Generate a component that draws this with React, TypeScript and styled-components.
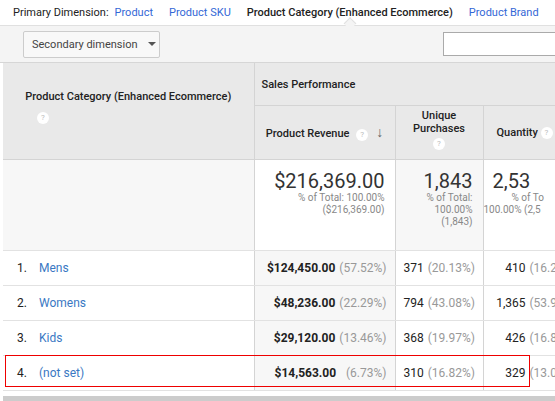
import React from "react";
import styled, { createGlobalStyle } from "styled-components";

const G = createGlobalStyle`
  body { margin: 0; font-family: Roboto, "Liberation Sans", sans-serif; background: #fff; overflow: hidden; }
`;
const Page = styled.div` width: 555px; height: 401px; overflow: hidden; position: relative; `;
const TopBar = styled.div`
  height: 25px; display: flex; align-items: center; gap: 16px; padding-left: 13px;
  font-size: 11px; color: #222; border-bottom: 1px solid #e0e0e0; position: relative;
`;
const Link = styled.span<{ $active?: boolean }>`
  color: ${p => (p.$active ? "#222" : "#3367d6")}; font-weight: ${p => (p.$active ? 500 : 400)};
  position: relative;
`;
const Caret = styled.span`
  position: absolute; left: 50%; bottom: -9px; width: 8px; height: 8px; background: #f4f4f4;
  border-left: 1px solid #e0e0e0; border-top: 1px solid #e0e0e0; transform: translateX(-50%) rotate(45deg);
`;
const Toolbar = styled.div`
  height: 36px; background: #f4f4f4; display: flex; align-items: center; justify-content: space-between;
  padding-left: 23px; border-bottom: 1px solid #d6d6d6;
`;
const Select = styled.div`
  height: 27px; width: 137px; box-sizing: border-box; border: 1px solid #ccc; border-radius: 2px; background: #f8f8f8;
  display: flex; align-items: center; gap: 10px; padding-left: 8px; font-size: 11px; color: #444;
`;
const Arrow = styled.span` width:0; height:0; border-left:4px solid transparent; border-right:4px solid transparent; border-top:4px solid #555; `;
const Search = styled.div` width: 120px; height: 22px; border: 1px solid #aaa; background: #fff; margin-right: -10px; `;
const Table = styled.table`
  margin-left: 3px; border-collapse: collapse; table-layout: fixed; width: 600px; font-size: 12px;
  td, th { padding: 0; }
`;
const Th = styled.th<{ $h?: number; $align?: string }>`
  background: #e9e9e9; border: 1px solid #d4d4d4; border-top: none; font-weight: 500; font-size: 11px; color: #222;
  height: ${p => p.$h ?? 0}px; text-align: ${p => p.$align ?? "center"}; vertical-align: middle;
`;
const Help = styled.span`
  display: inline-block; width: 12px; height: 12px; border-radius: 50%; background: #fff; color: #bbb;
  font-size: 8px; line-height: 12px; text-align: center; font-weight: 400; vertical-align: middle;
`;
const SortArrow = styled.span` margin-left: 8px; color: #666; font-size: 14px; font-weight: 700; `;
const TotalCell = styled.td<{ $bg: string }>`
  background: ${p => p.$bg}; border-left: 1px solid #d4d4d4; border-bottom: 1px solid #e2e2e2; height: 80px;
  vertical-align: top; text-align: right; padding: 10px 10px 0 0 !important; overflow: hidden; white-space: nowrap;
`;
const Big = styled.div` font-size: 20px; color: #333; line-height: 22px; `;
const Small = styled.div` font-size: 10px; color: #888; line-height: 12px; `;
const Cell = styled.td<{ $bg?: string; $align?: string }>`
  background: ${p => p.$bg ?? "#fff"}; border-left: 1px solid #d4d4d4; border-bottom: 1px solid #e2e2e2; height: 34px;
  text-align: ${p => p.$align ?? "right"}; padding: 0 8px 0 8px !important; white-space: nowrap; overflow: hidden; color: #222;
`;
const Pct = styled.span` color: #999; margin-left: 4px; `;
const Num = styled.span` display: inline-block; width: 22px; padding-left: 6px; `;
const Name = styled.span` color: #3a78c3; `;
const Bold = styled.b` font-weight: 700; `;
const Highlight = styled.div`
  position: absolute; left: 5px; top: 355px; width: 525px; height: 32px; border: 1px solid #e00; box-sizing: border-box;
`;
const Bottom = styled.div` position: absolute; left: 3px; right: 0; top: 396px; height: 5px; background: #ccc; `;

const rows = [
  ["1.", "Mens", "$124,450.00", "(57.52%)", "371", "(20.13%)", "410", "(16.2"],
  ["2.", "Womens", "$48,236.00", "(22.29%)", "794", "(43.08%)", "1,365", "(53.9"],
  ["3.", "Kids", "$29,120.00", "(13.46%)", "368", "(19.97%)", "426", "(16.8"],
  ["4.", "(not set)", "$14,563.00", "\u00a0\u00a0(6.73%)", "310", "(16.82%)", "329", "(13.0"],
];

export default function App() {
  return (
    <Page>
      <G />
      <TopBar>
        <span>Primary Dimension:</span>
        <Link style={{ marginLeft: -10 }}>Product</Link>
        <Link>Product SKU</Link>
        <Link $active>Product Category (Enhanced Ecommerce)<Caret /></Link>
        <Link>Product Brand</Link>
      </TopBar>
      <Toolbar>
        <Select>Secondary dimension <Arrow /></Select>
        <Search />
      </Toolbar>
      <Table>
        <colgroup>
          <col style={{ width: 251 }} /><col style={{ width: 141 }} /><col style={{ width: 88 }} /><col style={{ width: 120 }} />
        </colgroup>
        <thead>
          <tr>
            <Th rowSpan={2} $h={96} style={{ borderLeft: "none" }}>
              <div style={{ marginTop: -8 }}>Product Category (Enhanced Ecommerce)</div>
              <div style={{ textAlign: "left", paddingLeft: 34, marginTop: 8 }}><Help>?</Help></div>
            </Th>
            <Th colSpan={3} $h={42} $align="left" style={{ paddingLeft: 7 }}>Sales Performance</Th>
          </tr>
          <tr>
            <Th $h={53}>Product Revenue <Help style={{ marginLeft: 4 }}>?</Help><SortArrow>↓</SortArrow></Th>
            <Th $h={53}><div style={{ marginTop: -6 }}>Unique<br />Purchases</div><Help style={{ marginTop: 3 }}>?</Help></Th>
            <Th $h={53} $align="left" style={{ paddingLeft: 13 }}>Quantity <Help>?</Help></Th>
          </tr>
        </thead>
        <tbody>
          <tr>
            <TotalCell $bg="#f7f7f7" style={{ borderLeft: "none" }} />
            <TotalCell $bg="#fff"><Big>$216,369.00</Big><Small>% of Total: 100.00%</Small><Small>($216,369.00)</Small></TotalCell>
            <TotalCell $bg="#f7f7f7"><Big>1,843</Big><Small>% of Total:</Small><Small>100.00%</Small><Small>(1,843)</Small></TotalCell>
            <TotalCell $bg="#fff" style={{ textAlign: "left", paddingLeft: 8 }}><Big style={{ paddingLeft: 9 }}>2,53</Big><Small style={{ paddingLeft: 28 }}>% of To</Small><Small>100.00% (2,5</Small></TotalCell>
          </tr>
          {rows.map(r => (
            <tr key={r[0]}>
              <Cell $align="left" style={{ borderLeft: "none", padding: 0 }}><Num>{r[0]}</Num><Name>{r[1]}</Name></Cell>
              <Cell $bg="#f7f7f7"><Bold>{r[2]}</Bold><Pct>{r[3]}</Pct></Cell>
              <Cell $align="left">{r[4]}<Pct>{r[5]}</Pct></Cell>
              <Cell $align="left" style={{ paddingLeft: 4 }}><span style={{ display: "inline-block", width: 34, textAlign: "right" }}>{r[6]}</span><Pct>{r[7]}</Pct></Cell>
            </tr>
          ))}
        </tbody>
      </Table>
      <Highlight />
      <Bottom />
    </Page>
  );
}
